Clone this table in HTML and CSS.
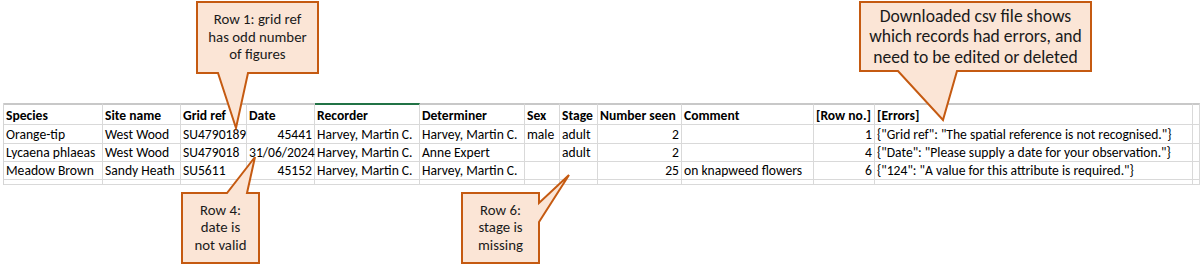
FILE: index.html
```html
<!DOCTYPE html>
<html lang="en">
<head>
<meta charset="utf-8">
<title>CSV errors</title>
<link rel="stylesheet" href="styles.css">
</head>
<body>
<div class="page">
  <div class="sheet">
    <div class="c hd">Species</div>
    <div class="c hd">Site name</div>
    <div class="c hd">Grid ref</div>
    <div class="c hd">Date</div>
    <div class="c hd sel">Recorder</div>
    <div class="c hd">Determiner</div>
    <div class="c hd">Sex</div>
    <div class="c hd">Stage</div>
    <div class="c hd">Number seen</div>
    <div class="c hd">Comment</div>
    <div class="c hd">[Row no.]</div>
    <div class="c hd">[Errors]</div>
    <div class="c hd"></div>

    <div class="c r1">Orange-tip</div>
    <div class="c r1">West Wood</div>
    <div class="c r1">SU4790189</div>
    <div class="c r1 num">45441</div>
    <div class="c r1">Harvey, Martin C.</div>
    <div class="c r1">Harvey, Martin C.</div>
    <div class="c r1">male</div>
    <div class="c r1">adult</div>
    <div class="c r1 num">2</div>
    <div class="c r1"></div>
    <div class="c r1 num">1</div>
    <div class="c r1">{"Grid ref": "The spatial reference is not recognised."}</div>
    <div class="c r1"></div>

    <div class="c r2">Lycaena phlaeas</div>
    <div class="c r2">West Wood</div>
    <div class="c r2">SU479018</div>
    <div class="c r2">31/06/2024</div>
    <div class="c r2">Harvey, Martin C.</div>
    <div class="c r2">Anne Expert</div>
    <div class="c r2"></div>
    <div class="c r2">adult</div>
    <div class="c r2 num">2</div>
    <div class="c r2"></div>
    <div class="c r2 num">4</div>
    <div class="c r2">{"Date": "Please supply a date for your observation."}</div>
    <div class="c r2"></div>

    <div class="c r3">Meadow Brown</div>
    <div class="c r3">Sandy Heath</div>
    <div class="c r3">SU5611</div>
    <div class="c r3 num">45152</div>
    <div class="c r3">Harvey, Martin C.</div>
    <div class="c r3">Harvey, Martin C.</div>
    <div class="c r3"></div>
    <div class="c r3"></div>
    <div class="c r3 num">25</div>
    <div class="c r3">on knapweed flowers</div>
    <div class="c r3 num">6</div>
    <div class="c r3">{"124": "A value for this attribute is required."}</div>
    <div class="c r3"></div>

    <div class="c r4"></div><div class="c r4"></div><div class="c r4"></div><div class="c r4"></div>
    <div class="c r4"></div><div class="c r4"></div><div class="c r4"></div><div class="c r4"></div>
    <div class="c r4"></div><div class="c r4"></div><div class="c r4"></div><div class="c r4"></div>
    <div class="c r4"></div>
  </div>

  <svg class="shapes" width="1200" height="265" viewBox="0 0 1200 265" aria-hidden="true">
    <path class="callout" d="M197,2 H318 V73 H248 L236,128 L218,73 H197 Z"/>
    <path class="callout" d="M860,2 H1091 V71 H957 L943,120 L898,71 H860 Z"/>
    <path class="callout" d="M182,193 H227 L255,157 L247,193 H259 V263 H182 Z"/>
    <path class="callout" d="M462,193 H539 V203 L569,175 L539,222 V263 H462 Z"/>
  </svg>

  <div class="note note-grid">Row 1: grid ref<br>has odd number<br>of figures</div>
  <div class="note note-csv">Downloaded csv file shows<br>which records had errors, and<br>need to be edited or deleted</div>
  <div class="note note-date">Row 4:<br>date is<br>not valid</div>
  <div class="note note-stage">Row 6:<br>stage is<br>missing</div>
</div>
</body>
</html>
```

FILE: styles.css
```css
html, body {
  margin: 0;
  padding: 0;
  background: #ffffff;
}

.page {
  position: relative;
  width: 1200px;
  height: 265px;
  overflow: hidden;
  font-family: Carlito, Calibri, Lato, "Noto Sans", sans-serif;
  color: #000000;
}

.sheet {
  margin-top: 103px;
  margin-left: 3px;
  border-left: 1px solid #d4d4d4;
  display: grid;
  grid-template-columns: 99px 78px 66px 68px 105px 105px 35px 38px 84px 132px 61px 318px 1fr;
  grid-template-rows: 22px 19px 18px 18px 5px;
}

.c {
  box-sizing: border-box;
  border-right: 1px solid #d9d9d9;
  border-bottom: 1px solid #d9d9d9;
  font-size: 13.6px;
  line-height: 15px;
  padding: 0 2px 1px 2px;
  white-space: nowrap;
  display: flex;
  align-items: flex-end;
  overflow: visible;
}

.hd {
  font-weight: bold;
  border-top: 2px solid #c8c8c8;
}

.hd.sel {
  border-top-color: #217346;
}

.num {
  justify-content: flex-end;
}

.shapes {
  position: absolute;
  left: 0;
  top: 0;
}

.callout {
  fill: #fbe5d6;
  stroke: #c55a11;
  stroke-width: 2;
  stroke-linejoin: miter;
}

.note {
  position: absolute;
  box-sizing: border-box;
  display: flex;
  align-items: center;
  justify-content: center;
  text-align: center;
  color: #1a1a1a;
  font-size: 14.8px;
  line-height: 17.5px;
}

.note-grid {
  left: 197px;
  top: 2px;
  width: 121px;
  height: 71px;
}

.note-csv {
  left: 860px;
  top: 2px;
  width: 231px;
  height: 69px;
  font-size: 17.6px;
  line-height: 20.5px;
}

.note-date {
  left: 182px;
  top: 193px;
  width: 77px;
  height: 70px;
}

.note-stage {
  left: 462px;
  top: 193px;
  width: 77px;
  height: 70px;
}
```
